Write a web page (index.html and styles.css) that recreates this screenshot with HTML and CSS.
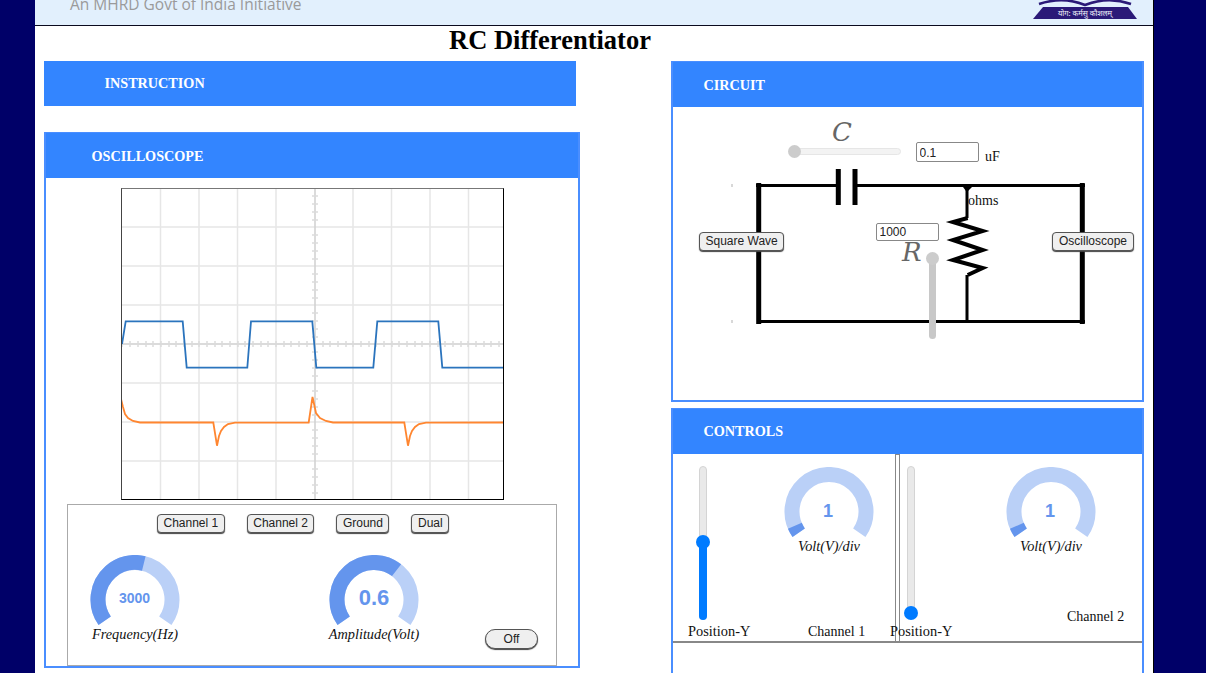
FILE: index.html
```html
<html><head><meta charset="UTF-8">
<meta name="viewport" content="width=device-width, initial-scale=1.0">
<title>RC Differentiator</title>
<link rel="stylesheet" href="styles.css">
</head>
<body>
    <div class="page">
        <header class="site-header">
            <span class="tagline">An MHRD Govt of India Initiative</span>
            <svg class="logo" width="114" height="24" viewBox="0 0 114 24">
                <path d="M11 4 Q35 -4 57 5 Q80 -4 103 4" fill="none" stroke="#2b1a78" stroke-width="2.5"/>
                <path d="M15 7 H100 L109 19 H5 Z" fill="#2b1a78"/>
                <text class="logo-motto" x="57" y="16" text-anchor="middle">योग: कर्मसु कौशलम्</text>
            </svg>
        </header>

        <h1 class="title">RC Differentiator</h1>

        <div class="columns">
            <div class="col">
                <div class="instruction-bar">INSTRUCTION</div>

                <section class="panel">
                    <h2 class="panel-head head-osc">OSCILLOSCOPE</h2>
                    <div class="scope">
                        <svg width="381" height="310" viewBox="122 189 381 310">
                            <path class="grid-line" d="M160.5 189V499M199 189V499M237.5 189V499M276 189V499M353 189V499M391.5 189V499M430 189V499M468.5 189V499"/>
                            <path class="grid-line" d="M122 227H503M122 266H503M122 305H503M122 383H503M122 422H503M122 461H503"/>
                            <path class="axis-line" d="M315 189V499M122 344H503"/>
                            <path class="axis-ticks" d="M122 341V347M130 341V347M138 341V347M146 341V347M153 341V347M161 341V347M169 341V347M176 341V347M184 341V347M192 341V347M199 341V347M207 341V347M215 341V347M222 341V347M230 341V347M238 341V347M245 341V347M253 341V347M261 341V347M268 341V347M276 341V347M284 341V347M291 341V347M299 341V347M307 341V347M323 341V347M330 341V347M338 341V347M346 341V347M353 341V347M361 341V347M369 341V347M376 341V347M384 341V347M392 341V347M399 341V347M407 341V347M415 341V347M422 341V347M430 341V347M438 341V347M445 341V347M453 341V347M461 341V347M468 341V347M476 341V347M484 341V347M491 341V347M499 341V347"/>
                            <path class="axis-ticks" d="M312 196H318M312 204H318M312 212H318M312 220H318M312 235H318M312 243H318M312 251H318M312 259H318M312 274H318M312 282H318M312 290H318M312 298H318M312 313H318M312 321H318M312 329H318M312 337H318M312 352H318M312 360H318M312 368H318M312 376H318M312 391H318M312 399H318M312 407H318M312 415H318M312 430H318M312 438H318M312 446H318M312 454H318M312 469H318M312 477H318M312 485H318M312 493H318"/>
                            <polyline class="trace-blue" points="122,344 125.7,321.3 182.7,321.3 186.7,367.7 247.3,367.7 251,321.3 312.3,321.3 316.3,367.7 373.3,367.7 377.3,321.3 438.3,321.3 442.3,367.7 503,367.7"/>
                            <polyline class="trace-orange" points="121,399 123,407 125,414 128,418 133,421 140,422.5 213.3,422.5 217,445.7 219,436 221,431 224,427 228,424 235,422.7 308.7,422.5 312.5,397 314.5,406 316,413 320,418 326,421 333,422.5 404.3,422.5 408,445.7 410,436 412,431 415,427 419,424 426,422.7 503,422.5"/>
                        </svg>
                    </div>
                    <div class="scope-controls">
                        <div class="mode-row">
                            <button class="btn">Channel 1</button>
                            <button class="btn">Channel 2</button>
                            <button class="btn">Ground</button>
                            <button class="btn">Dual</button>
                        </div>
                        <div class="knob-row">
                            <div class="gauge gauge-freq">
                                <svg width="90" height="72" viewBox="0 0 90 72">
                                    <path class="gauge-bg" d="M14.7 65.7A37 37 0 1 1 75.3 65.7"/>
                                    <path class="gauge-fill" pathLength="100" stroke-dasharray="55.5 100" d="M14.7 65.7A37 37 0 1 1 75.3 65.7"/>
                                    <text class="gauge-num num-sm" x="44.5" y="48">3000</text>
                                </svg>
                                <div class="gauge-label">Frequency(Hz)</div>
                            </div>
                            <div class="gauge gauge-amp">
                                <svg width="90" height="72" viewBox="0 0 90 72">
                                    <path class="gauge-bg" d="M14.7 65.7A37 37 0 1 1 75.3 65.7"/>
                                    <path class="gauge-fill" pathLength="100" stroke-dasharray="65 100" d="M14.7 65.7A37 37 0 1 1 75.3 65.7"/>
                                    <text class="gauge-num num-lg" x="45" y="50">0.6</text>
                                </svg>
                                <div class="gauge-label">Amplitude(Volt)</div>
                            </div>
                            <button class="btn btn-off">Off</button>
                        </div>
                    </div>
                </section>
            </div>

            <div class="col">
                <section class="panel panel-circuit">
                    <h2 class="panel-head head-right head-circuit">CIRCUIT</h2>
                    <div class="circuit">
                        <svg class="circuit-wires" width="469" height="293" viewBox="673 107 469 293">
                            <path class="wire" d="M756 185.5H838M855 185.5H1085M757 321.5H1085M967 185V218M967 275V322"/>
                            <path class="wire-thick" d="M758.7 183V324M1082.3 183V324M838.3 169V205M855 169V205"/>
                            <polyline class="wire-zig" points="967.7,218 953,222 982.7,231 953,240 982.7,250 953,260 982.7,268 967.7,275"/>
                            <path class="wire-joint" d="M963 187H972L968 191H966ZM963 323L966 320H969L973 323Z"/>
                            <path class="wire-dot" d="M732 184V187M732 320V323"/>
                        </svg>
                        <span class="sym sym-c">C</span>
                        <div class="c-slider"><span class="c-thumb"></span></div>
                        <input class="num-input input-c" type="text" value="0.1">
                        <span class="unit unit-uf">uF</span>
                        <span class="unit unit-ohms">ohms</span>
                        <input class="num-input input-r" type="text" value="1000">
                        <span class="sym sym-r">R</span>
                        <div class="r-slider"><span class="c-thumb r-thumb"></span></div>
                        <button class="btn btn-square">Square Wave</button>
                        <button class="btn btn-scope">Oscilloscope</button>
                    </div>
                </section>

                <section class="panel panel-controls">
                    <h2 class="panel-head head-right">CONTROLS</h2>
                    <div class="channels">
                        <div class="channel ch1">
                            <div class="pos-col">
                                <div class="vslider">
                                    <span class="vslider-fill" style="height: 78px"></span>
                                    <span class="vslider-thumb" style="top: 68px"></span>
                                </div>
                                <div class="cell-label pos-label">Position-Y</div>
                            </div>
                            <div class="gauge-col">
                                <div class="gauge">
                                    <svg width="90" height="72" viewBox="0 0 90 72">
                                        <path class="gauge-bg" d="M14.7 65.7A37 37 0 1 1 75.3 65.7"/>
                                        <path class="gauge-fill" pathLength="100" stroke-dasharray="5 100" d="M14.7 65.7A37 37 0 1 1 75.3 65.7"/>
                                        <text class="gauge-num num-md" x="44" y="50">1</text>
                                    </svg>
                                    <div class="gauge-label">Volt(V)/div</div>
                                </div>
                                <div class="cell-label channel-name">Channel 1</div>
                            </div>
                        </div>
                        <div class="divider"></div>
                        <div class="channel ch2">
                            <div class="pos-col">
                                <div class="vslider">
                                    <span class="vslider-thumb" style="top: 139px"></span>
                                </div>
                                <div class="cell-label pos-label">Position-Y</div>
                            </div>
                            <div class="gauge-col">
                                <div class="gauge">
                                    <svg width="90" height="72" viewBox="0 0 90 72">
                                        <path class="gauge-bg" d="M14.7 65.7A37 37 0 1 1 75.3 65.7"/>
                                        <path class="gauge-fill" pathLength="100" stroke-dasharray="5 100" d="M14.7 65.7A37 37 0 1 1 75.3 65.7"/>
                                        <text class="gauge-num num-md" x="44" y="50">1</text>
                                    </svg>
                                    <div class="gauge-label">Volt(V)/div</div>
                                </div>
                                <div class="cell-label channel-name">Channel 2</div>
                            </div>
                        </div>
                    </div>
                    <div class="below-channels"></div>
                </section>
            </div>
        </div>
    </div>
</body>
</html>
```

FILE: styles.css
```css
:root {
    --navy: #000068;
    --head-blue: #3385ff;
    --panel-border: #4a8eff;
    --gauge-on: #6495ed;
    --gauge-off: #bad0f7;
    --slider-blue: #007bff;
}

html, body {
    height: 100%;
    overflow: hidden;
}

body {
    margin: 0;
    padding: 0;
    background-color: var(--navy);
    font-family: 'Liberation Serif', serif;
    color: #111;
}

.page {
    box-sizing: content-box;
    width: 1118px;
    height: 673px;
    margin-left: 35px;
    background-color: #fff;
    border-right: 1px solid #000;
    overflow: hidden;
}

.site-header {
    display: flex;
    align-items: flex-start;
    justify-content: space-between;
    height: 25px;
    background-color: #e2f0fd;
    border-bottom: 1px solid #0a0a1e;
    overflow: hidden;
}

.tagline {
    margin: -5px 0 0 35px;
    font-family: 'Open Sans', sans-serif;
    font-size: 15.5px;
    line-height: 18px;
    color: #9a9a9a;
}

.logo {
    margin-right: 11px;
}

.logo-motto {
    font-family: 'Noto Sans', sans-serif;
    font-size: 7.5px;
    fill: #f0f0fa;
}

.title {
    margin: 0;
    padding-right: 88px;
    height: 35px;
    font-size: 26.5px;
    line-height: 29px;
    font-weight: bold;
    text-align: center;
    color: #000;
}

.columns {
    display: grid;
    grid-template-columns: 536px 473px;
    column-gap: 91px;
    padding-left: 9px;
}

.instruction-bar {
    width: 471.5px;
    height: 45px;
    margin-bottom: 26px;
    padding-left: 60.5px;
    background-color: var(--head-blue);
    color: #fff;
    font-size: 14.2px;
    font-weight: bold;
    line-height: 45px;
}

.panel {
    box-sizing: border-box;
    border: 2px solid var(--panel-border);
    border-top-width: 1px;
}

.panel-head {
    margin: 0;
    height: 45px;
    background-color: var(--head-blue);
    color: #fff;
    font-size: 14.2px;
    font-weight: bold;
    line-height: 45px;
}

.head-osc {
    padding-left: 45.5px;
    line-height: 47px;
}

.head-right {
    padding-left: 30.5px;
}

.head-circuit {
    line-height: 47px;
}

.scope {
    box-sizing: border-box;
    width: 383px;
    height: 312px;
    margin: 10px 0 4px 75px;
    border: 1px solid #000;
    border-top-color: #777;
    border-left-color: #444;
}

.scope svg {
    display: block;
}

.grid-line {
    fill: none;
    stroke: #e6e6e6;
    stroke-width: 1.5;
}

.axis-line {
    fill: none;
    stroke: #cfcfcf;
    stroke-width: 1.5;
}

.axis-ticks {
    fill: none;
    stroke: #dcdcdc;
    stroke-width: 1.5;
}

.trace-blue {
    fill: none;
    stroke: #2b74bd;
    stroke-width: 1.8;
}

.trace-orange {
    fill: none;
    stroke: #ff8630;
    stroke-width: 1.8;
}

.scope-controls {
    box-sizing: border-box;
    width: 490px;
    height: 162px;
    margin-left: 21px;
    border: 1px solid #aaa;
}

.btn {
    box-sizing: border-box;
    height: 19px;
    padding: 0 5.5px;
    background-color: #efefef;
    border: 1px solid #555;
    border-radius: 4px;
    box-shadow: 0 1px 1px #444;
    font-family: 'Liberation Sans', sans-serif;
    font-size: 12px;
    line-height: 15px;
    color: #222;
    white-space: nowrap;
    cursor: pointer;
}

.mode-row {
    display: flex;
    gap: 22px;
    margin: 9px 0 22px 89px;
}

.knob-row {
    display: flex;
    align-items: flex-start;
}

.gauge {
    width: 90px;
    text-align: center;
}

.gauge svg {
    display: block;
}

.gauge-freq {
    margin-left: 22px;
}

.gauge-amp {
    margin-left: 149px;
}

.gauge-bg {
    fill: none;
    stroke: var(--gauge-off);
    stroke-width: 15;
}

.gauge-fill {
    fill: none;
    stroke: var(--gauge-on);
    stroke-width: 15;
}

.gauge-num {
    fill: var(--gauge-on);
    font-family: 'Liberation Sans', sans-serif;
    font-weight: bold;
    text-anchor: middle;
}

.num-sm {
    font-size: 14px;
}

.num-md {
    font-size: 18px;
}

.num-lg {
    font-size: 22px;
}

.gauge-label {
    margin: -1px -10px 0;
    font-size: 14.3px;
    font-style: italic;
    line-height: 16px;
    white-space: nowrap;
}

.btn-off {
    width: 53px;
    height: 20px;
    margin: 74px 0 0 66px;
    border-radius: 10px;
}

.circuit {
    position: relative;
    height: 293px;
}

.circuit-wires {
    position: absolute;
    left: 0;
    top: 0;
}

.wire {
    fill: none;
    stroke: #000;
    stroke-width: 3;
}

.wire-thick {
    fill: none;
    stroke: #000;
    stroke-width: 5;
}

.wire-zig {
    fill: none;
    stroke: #000;
    stroke-width: 4;
}

.wire-joint {
    fill: #000;
}

.wire-dot {
    fill: none;
    stroke: #ccc;
    stroke-width: 1.5;
}

.sym {
    position: absolute;
    font-family: 'DejaVu Serif', serif;
    font-size: 26px;
    font-style: italic;
    line-height: 28px;
    color: #666;
}

.sym-c {
    left: 159px;
    top: 11px;
}

.sym-r {
    left: 229px;
    top: 131px;
}

.c-slider {
    position: absolute;
    left: 121px;
    top: 41px;
    box-sizing: border-box;
    width: 107px;
    height: 7px;
    background-color: #f3f3f3;
    border: 1px solid #e6e6e6;
    border-radius: 4px;
}

.c-thumb {
    position: absolute;
    left: -7px;
    top: -4px;
    width: 13px;
    height: 13px;
    border-radius: 50%;
    background-color: #ccc;
}

.r-slider {
    position: absolute;
    left: 256px;
    top: 151px;
    width: 7px;
    height: 81px;
    background-color: #c8c8c8;
    border-radius: 4px;
}

.r-thumb {
    left: -3px;
    top: -6px;
}

.num-input {
    position: absolute;
    box-sizing: border-box;
    padding: 0 2.5px;
    background-color: #fff;
    border: 1px solid #888;
    border-radius: 2px;
    font-family: 'Liberation Sans', sans-serif;
    font-size: 12px;
    color: #222;
}

.input-c {
    left: 243px;
    top: 35px;
    width: 63px;
    height: 20px;
    padding-top: 2px;
}

.input-r {
    left: 203px;
    top: 116px;
    width: 63px;
    height: 18px;
}

.unit {
    position: absolute;
    font-size: 14px;
    line-height: 16px;
}

.unit-uf {
    left: 312px;
    top: 42px;
}

.unit-ohms {
    left: 295px;
    top: 86px;
}

.btn-square {
    position: absolute;
    left: 26px;
    top: 125px;
    width: 85px;
}

.btn-scope {
    position: absolute;
    left: 379px;
    top: 125px;
    width: 82px;
}

.panel-controls {
    margin-top: 6px;
    height: 300px;
}

.channels {
    display: flex;
    height: 189px;
    border-bottom: 2px solid #888;
    box-sizing: border-box;
}

.channel {
    display: flex;
    padding-top: 12px;
    box-sizing: border-box;
}

.ch1 {
    width: 222px;
}

.ch2 {
    flex: 1;
}

.divider {
    box-sizing: border-box;
    width: 5px;
    border: 1px solid #888;
    border-bottom: none;
}

.pos-col {
    display: flex;
    flex-direction: column;
    width: 62px;
}

.ch1 .pos-col {
    margin-left: 15px;
}

.ch2 .pos-col {
    margin-left: -10px;
}

.vslider {
    position: relative;
    box-sizing: border-box;
    width: 8px;
    background-color: #e9e9e9;
    border: 1px solid #d4d4d4;
    border-radius: 4px;
}

.ch1 .vslider {
    height: 154px;
    margin-left: 11px;
}

.ch2 .vslider {
    height: 150px;
    margin-left: 17px;
}

.vslider-fill {
    position: absolute;
    left: -1px;
    bottom: -1px;
    width: 8px;
    background-color: var(--slider-blue);
    border-radius: 4px;
}

.vslider-thumb {
    position: absolute;
    left: -4px;
    width: 14px;
    height: 14px;
    border-radius: 50%;
    background-color: var(--slider-blue);
}

.cell-label {
    margin-top: 3px;
    font-size: 14px;
    line-height: 16px;
    white-space: nowrap;
}

.pos-label {
    font-size: 14.4px;
    margin-top: 3px;
}

.ch2 .pos-label {
    margin-top: 7px;
}

.gauge-col {
    display: flex;
    flex-direction: column;
    padding-top: 1px;
}

.ch1 .gauge-col {
    margin-left: 34px;
}

.ch2 .gauge-col {
    margin-left: 54px;
}

.channel-name {
    margin-top: auto;
}

.ch1 .channel-name {
    margin-left: 24px;
    padding-bottom: 1px;
}

.ch2 .channel-name {
    margin-left: 61px;
    padding-bottom: 16px;
}

.below-channels {
    height: 100px;
}
```
